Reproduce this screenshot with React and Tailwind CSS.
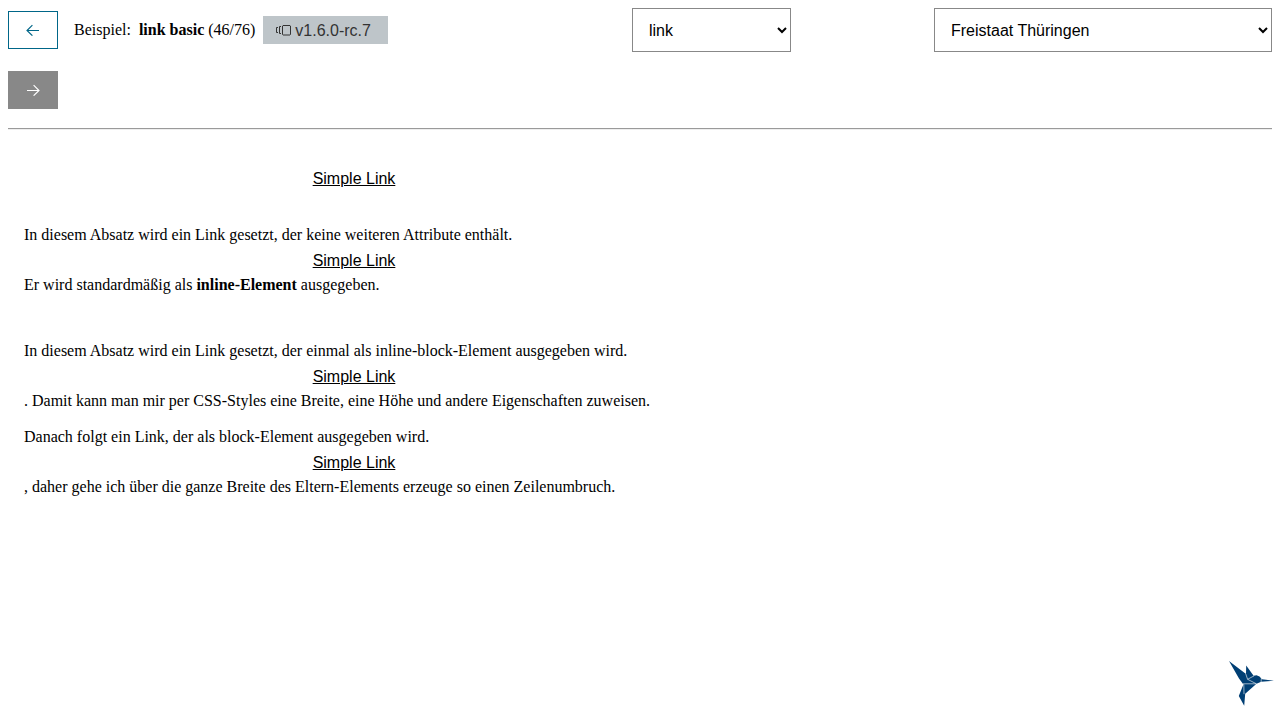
function BackIcon() {
  return (
    <svg width="14" height="12" viewBox="0 0 14 12" fill="none" stroke="currentColor" strokeWidth="1.15" aria-hidden="true">
      <path d="M13 6.5H1.2M6.4 1.1L1 6.5L6.4 11.7" />
    </svg>
  );
}

function NextIcon() {
  return (
    <svg width="14" height="12" viewBox="0 0 14 12" fill="none" stroke="currentColor" strokeWidth="1.15" aria-hidden="true">
      <path d="M1 6.5H12.8M7.6 1.1L13 6.5L7.6 11.7" />
    </svg>
  );
}

function VersionsIcon() {
  return (
    <svg width="15" height="11" viewBox="0 0 15 11" fill="none" stroke="currentColor" strokeWidth="1" aria-hidden="true">
      <path d="M7 .5H14L14.5 1V9.5L14 10H7L6.5 9.5V1ZM5 1.5H3.5V8.5H5M2 2.5H.5V7.5H2" />
    </svg>
  );
}

function Bird() {
  return (
    <svg width="46" height="46" viewBox="0 0 46 46" aria-hidden="true">
      <path
        fill="#003f74"
        d="M0 0L17 13L17.2 4.5L24.6 14.8L27.5 14.2L30.5 15.6L33 18.2L45 19.8L32.2 20.8L27.5 22.8L16.2 32.8L15.2 44.8L9.8 35L14.4 23.4L10 17.5Z"
      />
      <path
        fill="none"
        stroke="#fff"
        strokeWidth=".6"
        d="M16.8 13L18.6 18.3L27.4 22.8H14M18.6 18.3L25 14.9M14.8 23.2L15 33.2M32.4 17.2L32 21.2"
      />
    </svg>
  );
}

const selectClass =
  "h-11 border border-[#888] bg-white pl-3 font-['Liberation_Sans',sans-serif] text-base text-black";

function SimpleLink() {
  return (
    <div className="flex h-[26px] items-center justify-center pt-0.5 font-['Liberation_Sans',sans-serif]">
      <a href="#link" className="underline decoration-1 underline-offset-1">Simple Link</a>
    </div>
  );
}

export default function App() {
  return (
    <div className="min-h-screen bg-white p-2 font-['Liberation_Serif',serif] text-base text-black">
      <header className="grid grid-cols-[624fr_302fr_338fr] items-start">
        <div className="flex flex-col gap-4">
          <div className="flex h-11 items-center">
            <button type="button" aria-label="Vorheriges Beispiel" className="flex h-[38px] w-[50px] items-center justify-center border border-[#006688] text-[#006688]">
              <BackIcon />
            </button>
            <p className="ml-4 whitespace-nowrap">
              Beispiel:<strong className="ml-2">link basic</strong> (46/76)
            </p>
            <div className="ml-2 flex h-7 items-center gap-1 bg-[#bec5c9] pr-[17px] pl-[13px] pt-px font-['Liberation_Sans',sans-serif] text-[#333]">
              <VersionsIcon />
              <span>v1.6.0-rc.7</span>
            </div>
          </div>
          <div className="flex h-11 items-center">
            <button type="button" aria-label="Nächstes Beispiel" className="flex h-[38px] w-[50px] items-center justify-center bg-[#888] text-white">
              <NextIcon />
            </button>
          </div>
        </div>
        <select aria-label="Komponente" className={`${selectClass} w-[159px]`}>
          <option>link</option>
        </select>
        <select aria-label="Theme" className={`${selectClass} w-full`}>
          <option>Freistaat Thüringen</option>
        </select>
      </header>
      <hr className="mt-4 h-0.5 border-t border-b border-t-[#9a9a9a] border-b-[#eee]" />

      <main className="max-w-[692px] px-4 pt-[35px] leading-6">
        <SimpleLink />
        <div className="mt-8">
          <p>In diesem Absatz wird ein Link gesetzt, der keine weiteren Attribute enthält.</p>
          <SimpleLink />
          <p>Er wird standardmäßig als <strong>inline-Element</strong> ausgegeben.</p>
        </div>
        <div className="mt-[42px]">
          <p>In diesem Absatz wird ein Link gesetzt, der einmal als inline-block-Element ausgegeben wird.</p>
          <SimpleLink />
          <p>. Damit kann man mir per CSS-Styles eine Breite, eine Höhe und andere Eigenschaften zuweisen.</p>
        </div>
        <div className="mt-3">
          <p>Danach folgt ein Link, der als block-Element ausgegeben wird.</p>
          <SimpleLink />
          <p>, daher gehe ich über die ganze Breite des Eltern-Elements erzeuge so einen Zeilenumbruch.</p>
        </div>
      </main>

      <div className="fixed right-[5px] bottom-[13px]">
        <Bird />
      </div>
    </div>
  );
}
